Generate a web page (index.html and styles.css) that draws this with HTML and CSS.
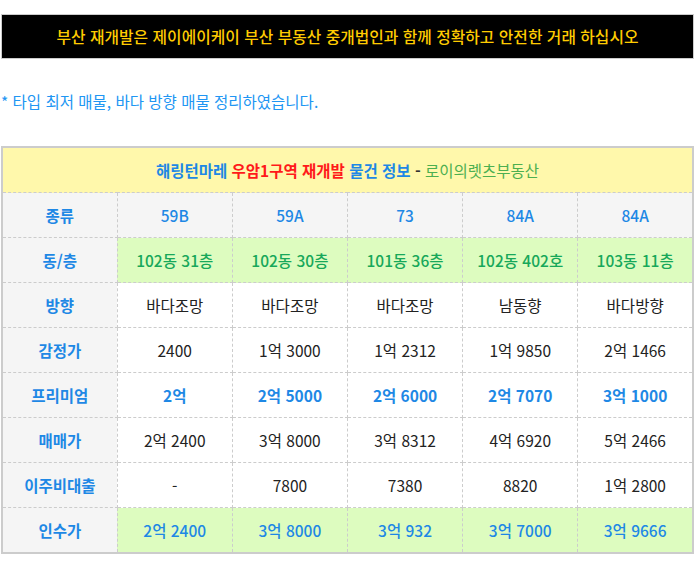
FILE: index.html
```html
<!DOCTYPE html>
<html lang="ko">
<head>
<meta charset="utf-8">
<link rel="stylesheet" href="styles.css">
</head>
<body>
<div class="page">
  <div class="banner">부산 재개발은 제이에이케이 부산 부동산 중개법인과 함께 정확하고 안전한 거래 하십시오</div>
  <p class="note">* 타입 최저 매물, 바다 방향 매물 정리하였습니다.</p>
  <table class="info">
    <tr class="title-row">
      <td colspan="6"><span class="blue">해링턴마레 </span><span class="red">우암1구역 재개발</span><span class="blue"> 물건 정보</span><span class="grey"> - </span><span class="green">로이의렛츠부동산</span></td>
    </tr>
    <tr class="head-row">
      <th>종류</th><td>59B</td><td>59A</td><td>73</td><td>84A</td><td>84A</td>
    </tr>
    <tr class="green-row">
      <th>동/층</th><td>102동 31층</td><td>102동 30층</td><td>101동 36층</td><td>102동 402호</td><td>103동 11층</td>
    </tr>
    <tr>
      <th>방향</th><td>바다조망</td><td>바다조망</td><td>바다조망</td><td>남동향</td><td>바다방향</td>
    </tr>
    <tr>
      <th>감정가</th><td>2400</td><td>1억 3000</td><td>1억 2312</td><td>1억 9850</td><td>2억 1466</td>
    </tr>
    <tr class="premium-row">
      <th>프리미엄</th><td>2억</td><td>2억 5000</td><td>2억 6000</td><td>2억 7070</td><td>3억 1000</td>
    </tr>
    <tr>
      <th>매매가</th><td>2억 2400</td><td>3억 8000</td><td>3억 8312</td><td>4억 6920</td><td>5억 2466</td>
    </tr>
    <tr>
      <th>이주비대출</th><td>-</td><td>7800</td><td>7380</td><td>8820</td><td>1억 2800</td>
    </tr>
    <tr class="final-row">
      <th>인수가</th><td>2억 2400</td><td>3억 8000</td><td>3억 932</td><td>3억 7000</td><td>3억 9666</td>
    </tr>
  </table>
</div>
</body>
</html>
```
FILE: styles.css
```css
html, body {
  margin: 0;
  padding: 0;
  background: #ffffff;
}
.page {
  padding: 14px 1px 0 1px;
  font-family: "Noto Sans CJK KR", "Noto Sans", sans-serif;
}
.banner {
  background: #000000;
  border: 1px solid #cccccc;
  height: 43px;
  display: flex;
  align-items: center;
  justify-content: center;
  color: #ffcc00;
  font-size: 15.8px;
  font-weight: 500;
}
.note {
  margin: 32px 0 0 0;
  font-size: 15.5px;
  color: #2196f3;
  line-height: 20px;
}
.info {
  margin-top: 35px;
  width: 693px;
  border-collapse: collapse;
  table-layout: fixed;
  border: 2px solid #cccccc;
  font-size: 15.5px;
}
.info td, .info th {
  border: 1px dashed #cccccc;
  height: 44px;
  padding: 0;
  text-align: center;
  color: #222222;
  font-weight: 400;
}
.info th {
  background: #f5f5f5;
  color: #1e88e5;
  font-weight: 700;
}
.title-row td {
  background: #fff8ab;
  font-weight: 700;
  font-size: 15.5px;
}
.blue { color: #1e88e5; }
.red { color: #ff1a1a; }
.grey { color: #333333; }
.green { color: #4caf50; font-weight: 400; }
.head-row td {
  background: #f5f5f5;
  color: #1e88e5;
  font-weight: 500;
}
.green-row td {
  background: #ddfcbf;
  color: #17a85a;
  font-weight: 500;
}
.premium-row td {
  color: #1e88e5;
  font-weight: 700;
}
.final-row td {
  background: #ddfcbf;
  color: #1e88e5;
  font-weight: 500;
}
```
